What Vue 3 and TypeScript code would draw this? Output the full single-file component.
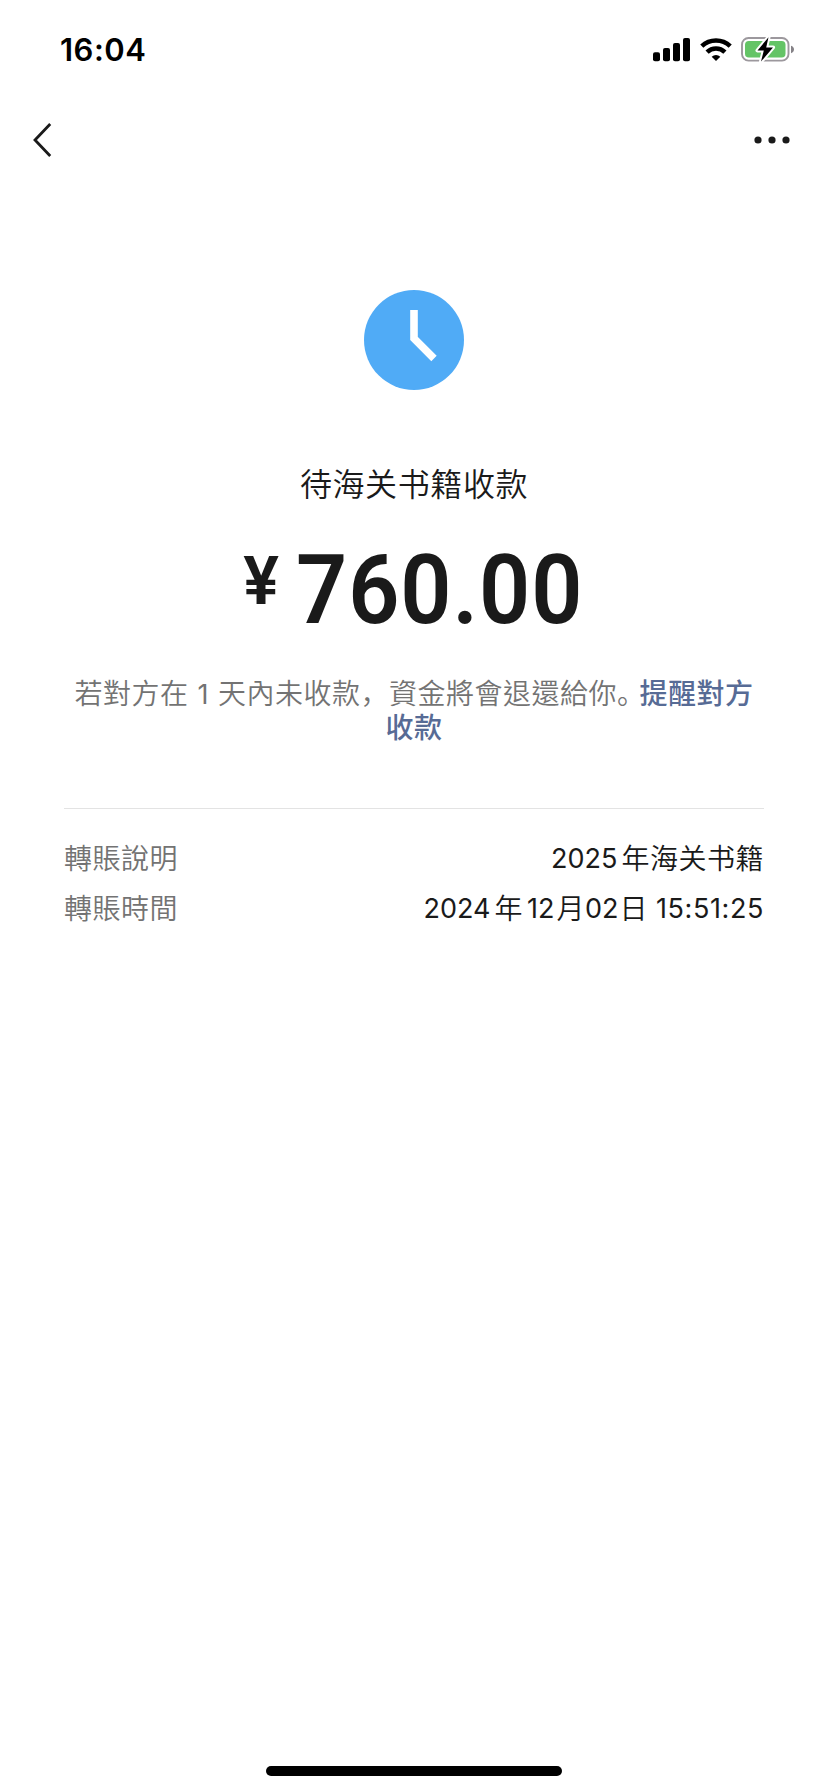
<script setup lang="ts">
interface Part {
  text: string
  kind: 'num' | 'cjk'
  key: string
}

interface Row {
  label: string
  value: Part[]
}

const rows: Row[] = [
  {
    label: '轉賬說明',
    value: [
      { text: '2025', kind: 'num', key: 'year' },
      { text: '年海关书籍', kind: 'cjk', key: 'subject' },
    ],
  },
  {
    label: '轉賬時間',
    value: [
      { text: '2024', kind: 'num', key: 'year' },
      { text: '年', kind: 'cjk', key: 'nian' },
      { text: '12', kind: 'num', key: 'month' },
      { text: '月', kind: 'cjk', key: 'yue' },
      { text: '02', kind: 'num', key: 'day' },
      { text: '日', kind: 'cjk', key: 'ri' },
      { text: '15:51:25', kind: 'num', key: 'time' },
    ],
  },
]
</script>

<template>
  <div class="screen">
    <header class="status">
      <span class="clock">16:04</span>
      <div class="indicators">
        <svg class="signal" width="38" height="24" viewBox="0 0 38 24">
          <rect x="0" y="14.2" width="7" height="9" rx="2" />
          <rect x="10" y="10" width="7" height="13.2" rx="2" />
          <rect x="20" y="5" width="7" height="18.2" rx="2" />
          <rect x="30" y="0" width="7" height="23.2" rx="2" />
        </svg>
        <svg class="wifi" width="32" height="24" viewBox="0 0 32 24">
          <g fill="none" stroke="#000" stroke-width="4.5">
            <path d="M1.8 8.1A20.5 20.5 0 0 1 30.2 8.1" />
            <path d="M7.1 14.1A12.6 12.6 0 0 1 24.9 14.1" />
          </g>
          <path d="M16 23L11.7 18.7A6.2 6.2 0 0 1 20.3 18.7Z" />
        </svg>
        <svg class="battery" width="54" height="28" viewBox="0 0 54 28">
          <rect x="1" y="3" width="46.5" height="22.6" rx="6.5" fill="#fff" stroke="#9c989d" stroke-width="1.9" />
          <rect x="4" y="6" width="40.5" height="16.6" rx="3.8" fill="#64c466" />
          <path d="M50 10.8C54 12 54 17 50 18.2Z" fill="#858287" />
          <path
            d="M27.5 2.2L16.5 15.5H22.8L20 26.6L32 12.4H25.2Z"
            fill="#000" stroke="#fff" stroke-width="4" stroke-linejoin="round" paint-order="stroke"
          />
        </svg>
      </div>
    </header>

    <nav class="nav">
      <svg width="20" height="36" viewBox="0 0 20 36">
        <path d="M17.2 2L2 18L17.2 34" fill="none" stroke="#1a1a1a" stroke-width="2.8" />
      </svg>
      <svg width="36" height="8" viewBox="0 0 36 8">
        <circle cx="4" cy="4" r="3.6" />
        <circle cx="18" cy="4" r="3.6" />
        <circle cx="32" cy="4" r="3.6" />
      </svg>
    </nav>

    <main class="content">
      <svg class="wait" width="100" height="100" viewBox="0 0 100 100">
        <circle cx="50" cy="50" r="50" fill="#50abf6" />
        <path d="M50 20V48.5L70 68.5" fill="none" stroke="#fff" stroke-width="7.6" />
      </svg>
      <h1 class="title">待海关书籍收款</h1>
      <div class="amount"><span class="yen">¥</span><span class="digits">760.00</span></div>
      <p class="notice">
        若對方在<span class="one">1</span>天內未收款<span class="punct">，</span>資金將會退還給你<span class="punct stop">。</span><a class="link">提醒對方<br>收款</a>
      </p>
      <dl class="details">
        <div v-for="row in rows" :key="row.label" class="row">
          <dt>{{ row.label }}</dt>
          <dd><span v-for="part in row.value" :key="part.key" :class="[part.kind, part.key]">{{ part.text }}</span></dd>
        </div>
      </dl>
    </main>

    <div class="home"></div>
  </div>
</template>

<style>
body {
  margin: 0;
  background: #fff;
}
</style>

<style scoped>
.screen {
  box-sizing: border-box;
  width: 828px;
  height: 1792px;
  display: flex;
  flex-direction: column;
  background: #fff;
  color: #1a1a1a;
  font-family: "Noto Sans CJK TC", "Noto Sans CJK SC", sans-serif;
  font-weight: 350;
  overflow: hidden;
}
.status {
  display: flex;
  justify-content: space-between;
  height: 98px;
  padding: 0 33px 0 60px;
}
.clock {
  margin-top: 30px;
  font: 600 31px/40px Inter, sans-serif;
  letter-spacing: 0.5px;
  color: #000;
}
.indicators {
  display: flex;
  align-items: flex-start;
}
.signal {
  margin-top: 38px;
}
.wifi {
  margin: 38px 0 0 9px;
}
.battery {
  margin: 35px 0 0 9px;
}
.nav {
  display: flex;
  align-items: center;
  justify-content: space-between;
  height: 84px;
  padding: 0 38px 0 33px;
  fill: #1a1a1a;
}
.content {
  flex: 1;
  display: flex;
  flex-direction: column;
  align-items: center;
  padding: 108px 64px 0;
}
.title {
  margin: 68px 0 0;
  font: 350 32px/48px "Noto Sans CJK SC", sans-serif;
  letter-spacing: 0.6px;
}
.amount {
  display: flex;
  align-items: flex-start;
  margin-top: 26px;
  height: 110px;
  font-family: Roboto, sans-serif;
  font-weight: 560;
}
.yen {
  margin: 9px 17px 0 0;
  font-size: 67px;
  font-weight: 600;
  line-height: 80px;
}
.digits {
  margin-right: -22px;
  font-size: 97px;
  line-height: 116px;
  letter-spacing: 1px;
  transform: scaleX(0.925);
  transform-origin: left;
}
.notice {
  margin: 33px 0 0;
  font-size: 28px;
  line-height: 34px;
  letter-spacing: 0.5px;
  text-align: center;
  white-space: nowrap;
  color: #737373;
}
.one {
  padding: 0 9px;
  font-family: Inter, sans-serif;
  font-weight: 400;
  font-size: 27px;
  line-height: 0;
}
.punct {
  font-family: "Noto Sans CJK SC", sans-serif;
  line-height: 0;
}
.stop {
  letter-spacing: -5.4px;
}
.link {
  color: #576b95;
  font-weight: 500;
}
.details {
  align-self: stretch;
  margin: 65px 0 0;
  padding-top: 23px;
  border-top: 1px solid #e3e3e3;
}
.row {
  display: flex;
  justify-content: space-between;
  height: 50px;
  font-size: 28px;
  line-height: 50px;
}
dt {
  color: #737373;
  letter-spacing: 0.5px;
}
dd {
  margin: 0;
  display: flex;
}
.cjk {
  font-family: "Noto Sans CJK SC", sans-serif;
  letter-spacing: 0.5px;
}
.num {
  font-family: Inter, sans-serif;
  font-weight: 400;
  font-size: 27px;
  line-height: 53px;
}
.year {
  margin-right: 4px;
}
.month {
  margin: 0 2px 0 4px;
}
.day {
  margin-right: 1px;
}
.time {
  margin-left: 8px;
  letter-spacing: 0.6px;
}
.home {
  align-self: center;
  width: 296px;
  height: 10px;
  margin-bottom: 16px;
  border-radius: 5px;
  background: #000;
}
</style>
